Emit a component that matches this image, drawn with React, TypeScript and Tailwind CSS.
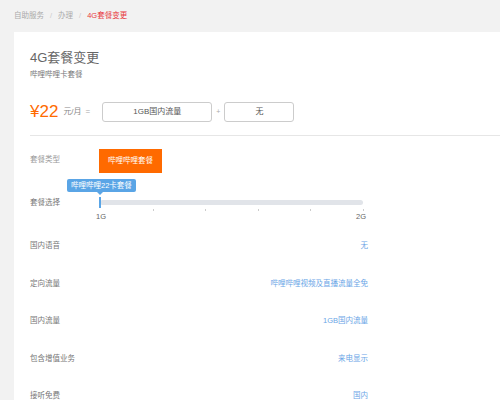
const FONT = "font-['Liberation_Sans','Noto_Sans_CJK_SC',sans-serif]";

const ROWS = [
  { label: '国内语音', value: '无' },
  { label: '定向流量', value: '哔哩哔哩视频及直播流量全免' },
  { label: '国内流量', value: '1GB国内流量' },
  { label: '包含增值业务', value: '来电显示' },
  { label: '接听免费', value: '国内' },
];

const TICKS = [0, 1, 2, 3, 4, 5];

export default function App() {
  return (
    <div className={`${FONT} h-[400px] w-[500px] overflow-hidden bg-[#f2f2f2]`}>
      {/* breadcrumb */}
      <div className="flex h-[32px] items-center gap-[6px] pl-[14px] text-[7.5px] text-[#aaa]">
        <span>自助服务</span>
        <span className="text-[#ccc]">/</span>
        <span>办理</span>
        <span className="text-[#ccc]">/</span>
        <span className="text-[#e8383d]">4G套餐变更</span>
      </div>

      <div className="ml-[14px] h-[368px] bg-white pl-[16px] pt-[18px]">
        <h1 className="text-[13px] leading-[16px] text-[#666]">4G套餐变更</h1>
        <p className="mt-[4px] text-[7.5px] leading-[10px] text-[#777]">哔哩哔哩卡套餐</p>

        {/* price */}
        <div className="mt-[22px] flex items-center">
          <span className="text-[17px] leading-[20px] text-[#ff6a00]">¥22</span>
          <span className="ml-[5px] text-[8px] text-[#888]">元/月</span>
          <span className="ml-[4px] text-[8px] text-[#aaa]">=</span>
          <div className="ml-[12px] flex h-[20px] w-[110px] items-center justify-center rounded-[3px] border border-[#ccc] text-[8px] text-[#555]">
            1GB国内流量
          </div>
          <span className="mx-[4px] text-[7px] text-[#aaa]">+</span>
          <div className="flex h-[20px] w-[70px] items-center justify-center rounded-[3px] border border-[#ccc] text-[8px] text-[#555]">
            无
          </div>
        </div>

        <div className="mt-[13px] h-px bg-[#e6e6e6]" />

        {/* type */}
        <div className="mt-[13px] flex items-start">
          <span className="mt-[5px] w-[69px] text-[7.5px] text-[#999]">套餐类型</span>
          <div className="flex h-[24px] w-[63px] items-center justify-center bg-[#ff6a00] text-[7.5px] text-white">
            哔哩哔哩套餐
          </div>
        </div>

        {/* slider */}
        <div className="mt-[6px] flex items-start">
          <span className="mt-[18px] w-[70px] text-[7.5px] text-[#777]">套餐选择</span>
          <div className="relative h-[44px] w-[265px]">
            <div className="absolute left-[-33px] top-0 flex h-[13px] items-center rounded-[2px] bg-[#5aa5e6] px-[4px] text-[7.5px] text-white">
              哔哩哔哩22卡套餐
            </div>
            <div className="absolute left-[-3px] top-[13px] h-0 w-0 border-x-[3px] border-t-[3px] border-x-transparent border-t-[#5aa5e6]" />
            <div className="absolute left-0 top-[21px] h-[5px] w-[263px] rounded-full bg-[#e1e4e9]" />
            <div className="absolute left-[-1px] top-[18px] h-[11px] w-[2px] bg-[#5aa5e6]" />
            {TICKS.slice(1).map((t) => (
              <div
                key={t}
                className="absolute top-[30px] h-[2px] w-px bg-[#ccc]"
                style={{ left: t * 52.5 }}
              />
            ))}
            <span className="absolute left-[-4px] top-[33px] text-[7.5px] leading-[9px] text-[#666]">1G</span>
            <span className="absolute left-[256px] top-[33px] text-[7.5px] leading-[9px] text-[#666]">2G</span>
          </div>
        </div>

        {/* details */}
        <div className="mt-[17px] flex flex-col">
          {ROWS.map((r) => (
            <div key={r.label} className="flex h-[37.5px] items-start">
              <span className="w-[70px] text-[7.5px] text-[#777]">{r.label}</span>
              <span className="w-[268px] text-right text-[7.5px] text-[#6aa5e6]">{r.value}</span>
            </div>
          ))}
        </div>
      </div>
    </div>
  );
}
